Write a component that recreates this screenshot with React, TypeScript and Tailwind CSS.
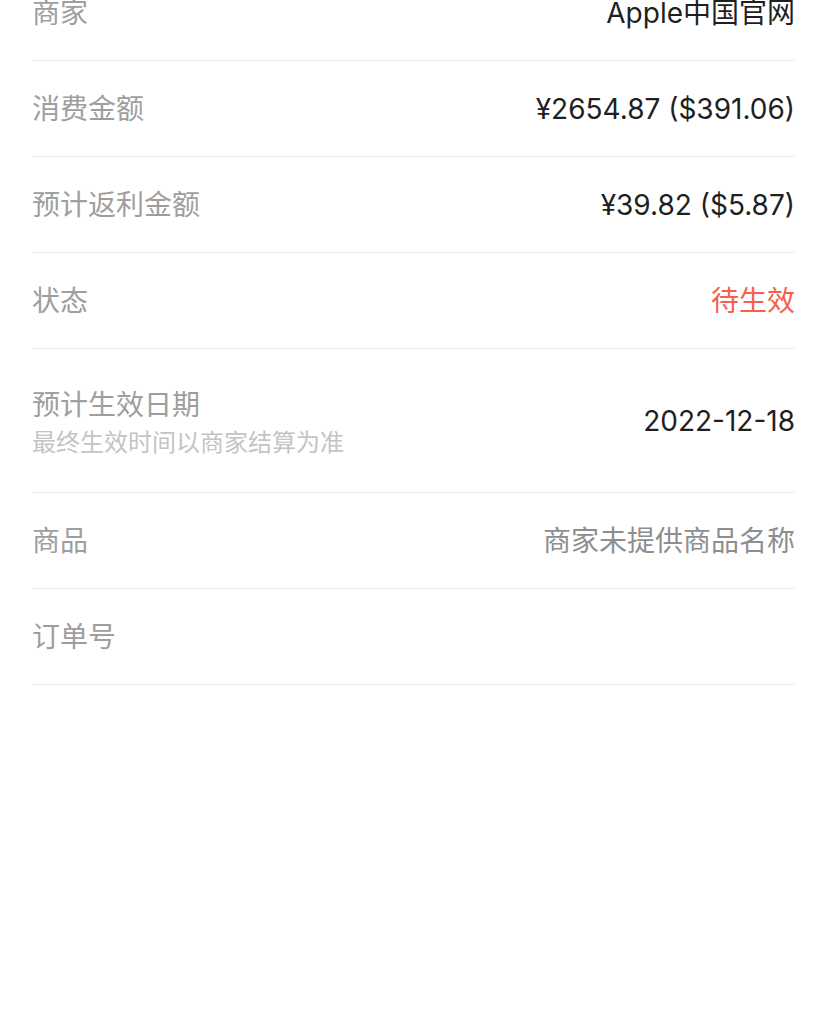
import React, { ReactNode } from "react";

interface Row {
  label: string;
  sub?: string;
  value?: ReactNode;
  tone?: "dark" | "muted" | "red";
  tall?: boolean;
}

const rows: Row[] = [
  { label: "商家", value: "Apple中国官网", tone: "dark" },
  { label: "消费金额", value: "¥2654.87 ($391.06)", tone: "dark" },
  { label: "预计返利金额", value: "¥39.82 ($5.87)", tone: "dark" },
  { label: "状态", value: "待生效", tone: "red" },
  {
    label: "预计生效日期",
    sub: "最终生效时间以商家结算为准",
    value: "2022-12-18",
    tone: "dark",
    tall: true,
  },
  { label: "商品", value: "商家未提供商品名称", tone: "muted" },
  { label: "订单号" },
];

const toneClass = {
  dark: "text-[#1f1f1f]",
  muted: "text-[#8e8e8e]",
  red: "text-[#f4604a]",
};

export default function App() {
  return (
    <div
      className="w-[826px] h-[1034px] overflow-hidden bg-white pl-8 pr-[31px]"
      style={{ fontFamily: '"Inter", "Noto Sans CJK SC", sans-serif' }}
    >
      <div className="-mt-[35px]">
        {rows.map((row) => (
          <div
            key={row.label}
            className={
              "flex items-center justify-between border-b border-[#ebebeb] " +
              (row.tall ? "h-[144px]" : "h-[96px]")
            }
          >
            <div className={"flex flex-col " + (row.sub ? "pt-1" : "")}>
              <span className="text-[28px] leading-[40px] text-[#9e9e9e]">
                {row.label}
              </span>
              {row.sub && (
                <span className="mt-[1px] text-[24px] leading-[34px] text-[#c4c4c4]">
                  {row.sub}
                </span>
              )}
            </div>
            {row.value && (
              <span
                className={
                  "text-[28px] leading-[40px] " + toneClass[row.tone ?? "dark"]
                }
              >
                {row.value}
              </span>
            )}
          </div>
        ))}
      </div>
    </div>
  );
}
